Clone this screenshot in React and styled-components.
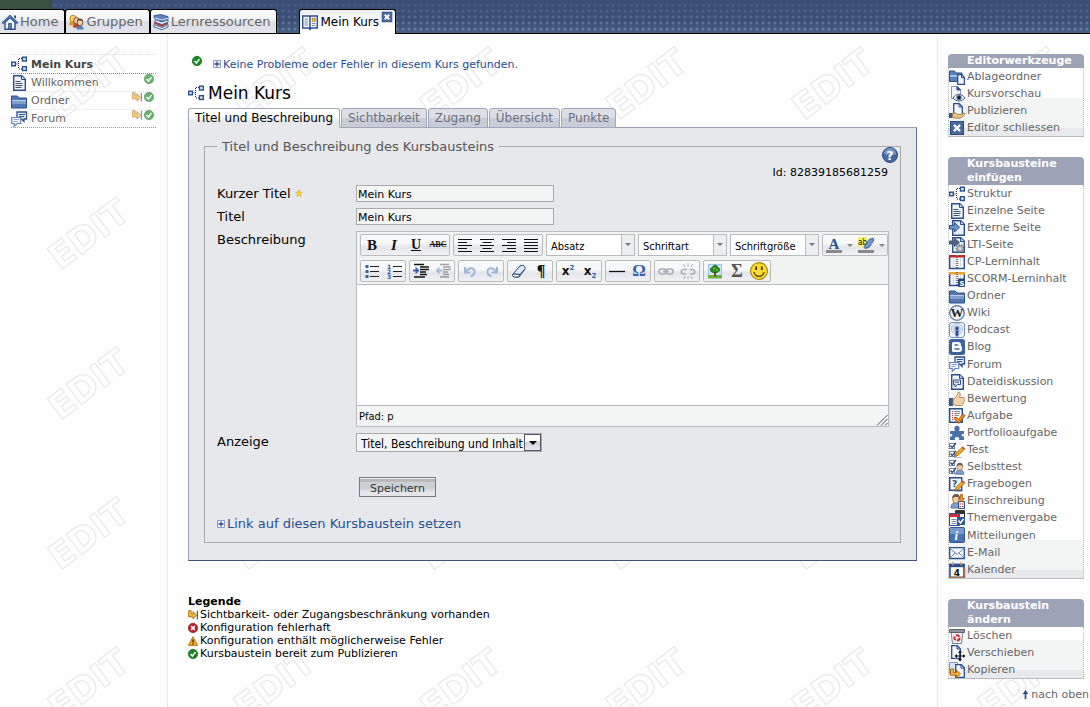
import React, { useState } from "react";
import styled, { createGlobalStyle, css } from "styled-components";

const verdana = `"DejaVu Sans", Verdana, sans-serif`;
const tahoma = `"DejaVu Sans Condensed", "DejaVu Sans", Tahoma, sans-serif`;

const blue = "#2a4f8c";
const sky = "#9db6da";

const Doc = ({ x = 2 }) => (
  <g transform={`translate(${x} 0)`}>
    <path d="M.7.7h8.1l3.5 3.5v11.1H.7z" fill="#eef2f9" stroke={blue} strokeWidth="1.4" />
    <path d="M8.5.8v3.7h3.7" fill="#c3d2e9" stroke={blue} />
  </g>
);

const Pencil = () => (
  <g>
    <path d="M5 15.5h8" stroke="#bbb" />
    <path d="M6 14.5l1-3.4 6.6-6 2 2.1-6.5 6.2z" fill="#f6a828" stroke="#a85d12" strokeWidth=".8" />
    <path d="M13 5.5l1-1 1.8 1.9-1 1z" fill="#c8382c" />
  </g>
);

const Person = () => (
  <g>
    <path d="M2 15c0-4 2-5.5 5-5.5S12 11 12 15z" fill="#7d9fcf" stroke="#44618f" strokeWidth=".8" />
    <ellipse cx="7" cy="6.2" rx="3.4" ry="4" fill="#f1c9a2" stroke="#8b6a4d" strokeWidth=".7" />
    <path d="M3.3 6C3 2.4 4.5 1 7.200 1s4.3 2 3.5 5L9.5 4 5 4z" fill="#6d5a4b" />
  </g>
);

const Checks = () => (
  <g fill="#fff" stroke="#6a84ad">
    <rect x=".5" y="1.5" width="5" height="5" />
    <rect x=".5" y="9.5" width="5" height="5" />
    <path d="M1.5 3.5l1.7 2L7 1M1.5 11.5l1.7 2L7 9" fill="none" stroke="#35496d" strokeWidth="1.3" />
  </g>
);

const Arrow = () => (
  <path d="M.5 5.5h5v-3l5 4.800-5 4.700V9h-5z" fill="#6f95cb" stroke={blue} />
);

const Folder = () => (
  <g>
    <path d="M.5 3h5.800l1.700 2h7.500v10H.5z" fill="#5679b2" stroke={blue} />
    <path d="M1 7h14v1.500H1z" fill="#b9cce8" />
    <path d="M1 8.500h14V11H1z" fill="#7f9ecd" />
  </g>
);

const Book = ({ band }) => (
  <g>
    <path d="M.7 2h14.6v12.500H.7z" fill="#f4f5f8" stroke={blue} strokeWidth="1.4" />
    <path d="M0 1h16v2.500H0z" fill={band} />
    <path d="M8 1v14" stroke="#777" strokeWidth="2.5" strokeDasharray="1 1" />
    <path d="M4.500 4v10M11.500 4v10" stroke="#d3dbea" />
  </g>
);

const ICONS = {
  struktur: (
    <g fill="#e7eefb" stroke={blue} strokeWidth="1.4">
      <rect x=".7" y="6.2" width="3.6" height="3.6" />
      <rect x="11.5" y="1.2" width="3.8" height="3.8" />
      <rect x="11.5" y="10.7" width="3.8" height="3.8" />
      <path d="M5.500 8h2M7.500 3v10M8 2.500h3M8 13h3" fill="none" stroke="#222" strokeWidth="1" strokeDasharray="1 1" />
    </g>
  ),
  seite: (
    <g>
      <Doc />
      <path d="M4.500 6.500h5M4.500 8.500h7M4.500 10.500h7M4.500 12.500h6" stroke="#48536a" />
    </g>
  ),
  extern: (
    <g>
      <Doc x={3} />
      <Arrow />
    </g>
  ),
  lti: (
    <g>
      <Doc x={3} />
      <path d="M.5 4h5V1.500l5 4-5 4V7h-5z" fill="#53657f" stroke="#41536f" />
      <circle cx="11" cy="11.5" r="3.6" fill="#aaa" stroke="#737373" strokeDasharray="1.5 1" strokeWidth="1.5" />
      <circle cx="11" cy="11.5" r="1.3" fill="#eee" />
    </g>
  ),
  cp: <Book band="#c4292b" />,
  scorm: (
    <g>
      <Book band="#f3a32a" />
      <rect x="9" y="7.5" width="7" height="8.5" rx="1" fill="#24467c" />
      <text x="10.4" y="14.5" fontSize="8" fontWeight="bold" fill="#fff" fontFamily={verdana}>s</text>
    </g>
  ),
  ordner: <Folder />,
  wiki: (
    <g>
      <circle cx="8" cy="8" r="7.300" fill="#eef0f3" stroke="#59749e" strokeWidth="1.3" />
      <text x="8" y="12.3" fontSize="13" fontWeight="bold" textAnchor="middle" fill="#222" fontFamily="Liberation Serif, serif">W</text>
    </g>
  ),
  podcast: (
    <g fill="none" stroke="#9db3d6">
      <rect x=".5" y=".5" width="15" height="15" rx="2.5" fill="#f2f6fc" stroke="#6f8fc0" />
      <circle cx="8" cy="7" r="5.5" />
      <circle cx="8" cy="7" r="3.3" />
      <circle cx="8" cy="6.5" r="1.9" fill={blue} stroke="none" />
      <path d="M6.300 8.500h3.400L9.200 14.500H6.800z" fill={blue} stroke="none" />
    </g>
  ),
  blog: (
    <g>
      <rect width="16" height="16" rx="2.5" fill="#3d639f" />
      <path d="M3 4.500A1.500 1.500 0 014.500 3H9a3 3 0 013 3c0 1.300.2 1.500 1 1.600V10a3 3 0 01-3 3H4.500A1.500 1.500 0 013 11.500z" fill="#fff" />
      <path d="M5.500 6h3.500M5.500 10h5" stroke="#3d639f" strokeWidth="1.6" />
    </g>
  ),
  forum: (
    <g>
      <path d="M6 1h9.500v7H13v2.500L10.500 8H6z" fill="#e3ebf8" stroke={blue} strokeWidth="1.3" />
      <path d="M8 3.500h6M8 5.500h5" stroke={blue} />
      <path d="M.7 6.500h9v6H6L3.200 15.300V12.500H.7z" fill="#f6f9fd" stroke="#6384b9" strokeWidth="1.2" />
      <path d="M2.500 8.500h5.500M2.500 10.500h4" stroke="#8aa4cd" />
    </g>
  ),
  datei: (
    <g>
      <Doc />
      <path d="M4.500 6h7v4.500h-3L6 13v-2.500H4.500z" fill="#dbe6f7" stroke={blue} />
      <path d="M6 8.200h4" stroke={blue} />
    </g>
  ),
  bewertung: (
    <g>
      <path d="M0 7h4v8H0z" fill="#37598f" />
      <path d="M4 8c3-1 4-3 5-6.500 2-.8 3 1 1.500 5h4c1.300 0 1.300 2 .3 2.200 1 .6.7 2-.3 2.200.5.8.2 1.700-.8 1.900.3 1-.2 1.700-1.200 1.700H7L4 13z" fill="#f3d3a6" stroke="#a98258" strokeWidth=".9" />
    </g>
  ),
  aufgabe: (
    <g>
      <path d="M.7.7h12.6v13.6H.7z" fill="#f8f9fc" stroke={blue} strokeWidth="1.4" />
      <path d="M3 3.500h1M3 5.500h1M3 7.500h1M3 9.500h1M3 11.500h1" stroke="#c44" />
      <path d="M5.500 3.500H11M5.500 5.500H11M5.500 7.500H10M5.500 9.500H7" stroke="#888" />
      <path d="M5 10.500l2-1.500 2.500 2.500 4.500-5.500 2 1.500-6.200 8z" fill="#f08a24" stroke="#a04b0c" strokeWidth=".9" />
    </g>
  ),
  portfolio: (
    <path d="M1 6h5C4.500 3.500 5.500.8 8 .8s3.500 2.700 2 5.200h5v3.500c-1.500-1-2.500-.2-2.300 1 .2 1.200 1.300 1.300 2.300.5V15h-5c.8-2-.4-3-2-3s-2.800 1-2 3H1v-4c1 .8 2.100.7 2.300-.5.2-1.200-.8-2-2.300-1z" fill="#4a70ab" />
  ),
  test: (
    <g>
      <Checks />
      <Pencil />
    </g>
  ),
  selbsttest: (
    <g>
      <Checks />
      <g transform="translate(5 3) scale(.82)">
        <Person />
      </g>
    </g>
  ),
  fragebogen: (
    <g>
      <path d="M.7 1.700h12v12.6H.7z" fill="#f3f6fb" stroke={blue} strokeWidth="1.4" />
      <text x="3" y="10.5" fontSize="9" fontWeight="bold" fill={blue} fontFamily={verdana}>?</text>
      <Pencil />
    </g>
  ),
  einschreibung: (
    <g>
      <Person />
      <path d="M9.500 8.500h6v7h-6z" fill="#fff" stroke={blue} />
      <path d="M10.500 11H12M13 11h1.500M10.500 13.500H12M13 13.500h1.500" stroke="#b33" />
      <path d="M11.500 1.500h2v4h2l-3 3.500-3-3.500h2z" fill="#f49a2c" stroke="#a8560e" strokeWidth=".8" />
    </g>
  ),
  themen: (
    <g>
      <path d="M6.500.5h9v12h-9z" fill="#eef1f6" stroke="#333" />
      <path d="M7 1h8.500v3H7z" fill="#333" />
      <path d="M.5 3.500h10v12H.5z" fill="#f7f8fa" stroke={blue} />
      <path d="M1 4h9.500v3H1z" fill="#cf3038" />
      <path d="M2.500 9.500h5M2.500 11.500h5M2.500 13.500h5" stroke="#7f91b0" />
      <path d="M8 7h8v8H8z" fill="#2f5a99" />
      <path d="M9.500 10.500l2 2.500 3-4" fill="none" stroke="#fff" strokeWidth="1.5" />
    </g>
  ),
  mitteilung: (
    <g>
      <rect x=".5" y=".5" width="15" height="15" rx="1" fill="#4a73b2" stroke="#2f5694" />
      <path d="M1 1h14v6H1z" fill="#7799cb" />
      <text x="5.5" y="13" fontSize="13" fontStyle="italic" fontWeight="bold" fill="#fff" fontFamily="Liberation Serif, serif">i</text>
    </g>
  ),
  mail: (
    <g>
      <path d="M.7 2.700h14.600v10.800H.7z" fill="#f3f6fb" stroke={blue} strokeWidth="1.3" />
      <path d="M1 3.500l7 6 7-6M1 13l5-5M15 13l-5-5" fill="none" stroke="#6a86b4" />
    </g>
  ),
  kalender: (
    <g>
      <path d="M1 2.500h14v12.8H1z" fill="#fff" stroke={blue} strokeWidth="1.6" />
      <path d="M.3 1.800h15.400v3.400H.3z" fill={blue} />
      <path d="M4 .3v3M12 .3v3" stroke="#c99a6a" strokeWidth="1.6" />
      <path d="M.5 15.500h15.300V6" fill="none" stroke="#b9783b" />
      <text x="8" y="13.8" fontSize="9" fontWeight="bold" textAnchor="middle" fill="#111" fontFamily={verdana}>4</text>
    </g>
  ),
  ablage: (
    <g>
      <path d="M.5 2h5L7 4h6v8.500H.5z" fill="#5c80b8" stroke={blue} />
      <path d="M1 6h12v2H1z" fill="#a9c0e2" />
      <path d="M8.700 5.700h4l2.700 2.700v6.900H8.700z" fill="#f0f5fc" stroke={blue} strokeWidth="1.3" />
      <path d="M12.500 6v2.700h3" fill="none" stroke={blue} />
    </g>
  ),
  vorschau: (
    <g>
      <path d="M2.500.5h6l3 3v9h-9z" fill="#f4f7fc" stroke="#7f97bd" />
      <path d="M8 .5V4h3.500z" fill={blue} stroke={blue} />
      <path d="M4 12c3-5 8.500-5 12 0-3.500 4-9 4-12 0z" fill="#e8edf4" stroke="#555f70" />
      <circle cx="10" cy="11.5" r="2.6" fill="#3f6396" />
      <circle cx="10" cy="11.5" r="1.2" fill="#111" />
    </g>
  ),
  publizieren: (
    <g>
      <path d="M4.700.7h5.600l3 3v8.600H4.700z" fill="#f1f5fb" stroke={blue} strokeWidth="1.3" />
      <path d="M10 1v3h3.300" fill="none" stroke={blue} />
      <path d="M0 10h3.500v5H0z" fill="#37598f" />
      <path d="M3.500 10.500l3-.5L9 11.500h3l3.500-1.500c1 .8.5 1.700-4 5-1.500.5-4 .3-8-.5z" fill="#efc48c" stroke="#a4743d" strokeWidth=".9" />
    </g>
  ),
  schliessen: (
    <g>
      <rect x="1.5" y="1.5" width="13" height="13" fill="#4b6b9e" stroke="#27477d" />
      <path d="M5 5l6 6M11 5l-6 6" stroke="#fff" strokeWidth="2.4" />
    </g>
  ),
  loeschen: (
    <g>
      <path d="M2 4h12l-1.500 11.500h-9z" fill="#eceef2" stroke="#7b8494" />
      <path d="M.5 1.500h15v3H.5z" fill="#8e959f" stroke="#5d6470" />
      <circle cx="8" cy="9.8" r="2.6" fill="none" stroke="#d3222f" strokeWidth="2" strokeDasharray="4 1.4" />
    </g>
  ),
  verschieben: (
    <g>
      <path d="M2.700.7h5.600l3 3v9.600H2.700z" fill="#f4f7fc" stroke={blue} strokeWidth="1.3" />
      <path d="M8 1v3h3.300" fill="none" stroke={blue} />
      <path d="M11 6v10M6 11h10" stroke="#111" strokeWidth="1.2" />
      <path d="M11 5.500l2 2.200H9zM11 16.200l2-2.200H9zM5.800 11L8 9v4zM16.200 11L14 9v4z" fill="#111" />
    </g>
  ),
  kopieren: (
    <g>
      <path d="M.5.5h8v11h-8z" fill="#d9e4f5" stroke="#7d9ac8" />
      <path d="M6.700 2.700h5.600l3 3v9.600H6.700z" fill="#f2f6fc" stroke={blue} strokeWidth="1.3" />
      <path d="M12 3v3.200h3.300" fill="none" stroke={blue} />
      <path d="M1.500 7h3v3.500h3V8l4 4-4 3.800v-2.600h-6z" fill="#f7b03b" stroke="#a8640f" strokeWidth=".9" />
    </g>
  ),
  home: (
    <g>
      <path d="M3 8v7.300h10V8L8 3.500z" fill="#f3f6fb" stroke={blue} strokeWidth="1.4" />
      <path d="M0 8.700L8 1l8 7.700-1.500 1L8 4 1.500 9.700z" fill="#4f76b1" stroke={blue} strokeWidth=".8" />
      <path d="M6.500 9.500h3V15h-3z" fill="#5a80ba" stroke={blue} strokeWidth=".8" />
      <path d="M12 1.500h2V5l-2-1.800z" fill={blue} />
    </g>
  ),
  gruppen: (
    <g>
      <ellipse cx="5" cy="4.8" rx="3.2" ry="3.6" fill="#f6d06a" stroke="#b78a2c" />
      <path d="M1 11c0-3 1.500-3.500 4-3.500S9 9 9 12z" fill="#e08f2c" />
      <ellipse cx="8.5" cy="6.8" rx="2.8" ry="3.3" fill="#f2c79c" stroke="#7b4b2c" />
      <path d="M5 13.500c0-3 1.500-3.500 4-3.500s3.500 2 3.500 4z" fill="#b9422f" />
      <ellipse cx="12" cy="8.5" rx="2.8" ry="3.3" fill="#f4d0a8" stroke="#6d4a35" />
      <path d="M9 7.500c0-4 6-4 6 0l-1.500-1h-3z" fill="#5b4335" />
      <path d="M8.500 15.500c0-3 1.200-3.700 3.500-3.700s3.700 1.200 3.700 3.700z" fill="#5781bd" />
    </g>
  ),
  lern: (
    <g stroke={blue} strokeWidth=".8">
      <path d="M1 10.500l8 3 6-3V13l-6 2.700L1 13z" fill="#e6ebf4" />
      <path d="M1 9l5-2 9 2-6 3.500z" fill="#d0453f" stroke="#96302c" />
      <path d="M2 5.500L9 8l6-2.500V8l-6 2.500L2 8z" fill="#f1f3f8" />
      <path d="M1 1.500L8 .6l7 2v3L8.500 7 1 4z" fill="#5d84be" />
      <path d="M1.500 3.800l7 2.200L15 4.500" fill="none" stroke="#fff" />
    </g>
  ),
  kurs: (
    <g>
      <path d="M.7 2h14.6v12H9l-1 1.500L7 14H.7z" fill="#f7f9fc" stroke={blue} strokeWidth="1.4" />
      <path d="M8 2v13" stroke={blue} strokeWidth="1.5" />
      <path d="M2.500 5H6M2.500 7H6M2.500 9H6M2.500 11H6M10 9.500h3.500M10 11.500h3.500" stroke="#7d8ea9" />
      <rect x="10.2" y="4.2" width="3" height="3" fill="#f4c04c" stroke="#a8842b" strokeWidth=".8" />
    </g>
  ),
  ok: (
    <g>
      <circle cx="8" cy="8" r="7.5" fill="#168a1e" stroke="#0d5a13" />
      <path d="M4 8l3 3.200L12 5" fill="none" stroke="#fff" strokeWidth="2.4" />
    </g>
  ),
  fehler: (
    <g>
      <circle cx="8" cy="8" r="7.5" fill="#b3242c" stroke="#7b1218" />
      <path d="M5 5l6 6M11 5l-6 6" stroke="#fff" strokeWidth="2.4" />
    </g>
  ),
  warnung: (
    <g>
      <path d="M8 1l7.500 14H.5z" fill="#f5a524" stroke="#9c650d" strokeWidth="1.2" />
      <path d="M8 5.500v5M8 11.500v2" stroke="#3a2503" strokeWidth="2" />
    </g>
  ),
  zugang: (
    <g>
      <path d="M1 1h4v5.500h3V2.500l5.500 6-5.500 6V11H1z" fill="#f8b63c" stroke="#b0700f" strokeWidth="1.4" />
      <path d="M15 1v14" stroke="#3f5f96" strokeWidth="2" />
    </g>
  ),
  hilfe: (
    <g>
      <circle cx="8" cy="8" r="7.5" fill="#46699f" stroke="#284a80" />
      <path d="M2 7a6 6 0 0112 0c-4 1.500-8 1.500-12 0z" fill="#7897c6" />
      <text x="8" y="12.6" fontSize="12.5" fontWeight="bold" textAnchor="middle" fill="#fff" fontFamily={verdana}>?</text>
    </g>
  ),
  stern: (
    <path d="M8 1l2 5 5 .4-4 3.400 1.300 5.200L8 12.200 3.700 15 5 9.800 1 6.400 6 6z" fill="#fbcf3f" stroke="#d99f23" />
  ),
  plus: (
    <g>
      <path d="M1 1h14v14H1z" fill="#eef2fa" stroke="#8b9fc3" strokeWidth="2" />
      <path d="M8 3v10M3 8h10" stroke={blue} strokeWidth="2.6" />
    </g>
  ),
  hoch: <path d="M8 0l5 7H9.500v9h-3V7H3z" fill={blue} />,
  left: <path d="M1 2.500h14M1 5.500h9M1 8.500h14M1 11.500h9M1 14.500h14" stroke="#111" strokeWidth="1.2" />,
  center: <path d="M1 2.500h14M3.500 5.500h9M1 8.500h14M3.500 11.500h9M1 14.500h14" stroke="#111" strokeWidth="1.2" />,
  right: <path d="M1 2.500h14M6 5.500h9M1 8.500h14M6 11.500h9M1 14.500h14" stroke="#111" strokeWidth="1.2" />,
  block: <path d="M1 2.500h14M1 5.500h14M1 8.500h14M1 11.500h14M1 14.500h14" stroke="#111" strokeWidth="1.2" />,
  punkte: (
    <g>
      <path d="M6 3.500h9M6 8.500h9M6 13.500h9" stroke="#222" strokeWidth="1.1" />
      <path d="M1.500 2h3v3h-3zM1.500 7h3v3h-3zM1.500 12h3v3h-3z" fill="#3e63a3" />
    </g>
  ),
  nummern: (
    <g>
      <path d="M7 3.500h9M7 8.500h9M7 13.500h9" stroke="#222" strokeWidth="1.1" />
      <g fontSize="6" fontWeight="bold" fill="#2f56a0" fontFamily={verdana}>
        <text x="1" y="5.5">1</text>
        <text x="1" y="10.5">2</text>
        <text x="1" y="15.8">3</text>
      </g>
    </g>
  ),
  einzug: (
    <g>
      <path d="M1 1.500h10M7 4h9M7 6.500h9M7 9h6M7 11.500h7M1 14h11" stroke="#111" strokeWidth="1.4" />
      <path d="M0 6.500h2.500v-3l4 4-4 4v-3H0z" fill="#3c69b5" />
    </g>
  ),
  auszug: (
    <g opacity=".4">
      <path d="M5 1.500h9M8 4h8M8 6.500h8M8 9h5M8 11.500h6M5 14h9" stroke="#222" strokeWidth="1.4" />
      <path d="M7 6.500H4.500v-3l-4 4 4 4v-3H7z" fill="#3c69b5" />
    </g>
  ),
  undo: <path d="M3 4v5.500h5.500M3.500 9C7 3.500 13 4.500 12.500 9c-.3 2.500-2 4-4 4.500" fill="none" stroke={sky} strokeWidth="2" />,
  redo: <path d="M13 4v5.500H7.500M12.500 9C9 3.500 3 4.500 3.500 9c.3 2.500 2 4 4 4.500" fill="none" stroke={sky} strokeWidth="2" />,
  radierer: (
    <g stroke="#2c4876">
      <path d="M2 11l7-8c3-1.500 6 .5 5 3l-6 8H4.500C2.500 14 1 13 2 11z" fill="#dce8f8" />
      <path d="M2 11l7 .5 5-5.500" fill="none" />
      <path d="M2 11l7 .5L8 14H4.500C2 14 1 13 2 11z" fill="#fff" />
    </g>
  ),
  linie: <path d="M0 8.500h16" stroke="#111" strokeWidth="1.3" />,
  link: (
    <g fill="none" stroke="#a9afba" strokeWidth="1.6">
      <rect x="1" y="6" width="7" height="5" rx="2.5" />
      <rect x="8" y="6" width="7" height="5" rx="2.5" />
      <path d="M5 8.500h6" />
    </g>
  ),
  unlink: (
    <g fill="none" stroke="#a9afba" strokeWidth="1.6">
      <path d="M7 6.500H3.500a2.200 2.200 0 000 4.500H6M9.500 6.500h3a2.200 2.200 0 010 4.500H10" />
      <path d="M5 4L3.500 1M8 3.500V.5M11 4l1.500-3M5 13l-1.500 3M8 13.500V16M11 13l1.500 3" strokeWidth="1" />
    </g>
  ),
  bild: (
    <g>
      <path d="M1.500 1.500h13v13h-13z" fill="#cfe6fb" stroke="#9cc3e6" />
      <path d="M1 12h14v3.500H1z" fill="#6bb23f" />
      <path d="M7 9h2.200v4.500H7z" fill="#7b4a1e" />
      <path d="M8 2.500c2 0 2.500 1 2.500 2 2.500.2 3 3.500.5 4.500-1.500.7-4.500.7-6 0-2.500-1-2-4.300.5-4.500 0-1 .8-2 2.500-2z" fill="#2f8f22" stroke="#176312" />
      <path d="M6 5.500h2M9 7h2" stroke="#8bd458" />
    </g>
  ),
  smile: (
    <g>
      <circle cx="8" cy="8" r="7.5" fill="#fbdc2e" stroke="#a8850c" />
      <path d="M5.500 4v3M10.500 4v3" stroke="#4a3504" strokeWidth="1.6" />
      <path d="M3.500 9c1.500 5 7.500 5 9 0" fill="none" stroke="#4a3504" strokeWidth="1.2" />
    </g>
  ),
  textfarbe: (
    <g>
      <text x="8" y="12" fontSize="15" fontWeight="bold" textAnchor="middle" fill={blue} fontFamily="Liberation Serif, serif">A</text>
      <path d="M0 13h16v3H0z" fill="#888" />
    </g>
  ),
  marker: (
    <g>
      <path d="M0 0h9v10H0z" fill="#f6ee6c" />
      <text x="0" y="8" fontSize="8" fill="#111" fontFamily={tahoma}>ab</text>
      <path d="M6 10.500l5-8 4-1.500 1 2-5 7.500-4 1z" fill="#6f98cb" stroke="#2f5288" strokeWidth=".8" />
      <path d="M0 13h16v3H0z" fill="#888" />
    </g>
  ),
};

function Icon({ name, size = 16 }) {
  return (
    <Svg width={size} height={size} viewBox="0 0 16 16" aria-hidden="true">
      {ICONS[name]}
    </Svg>
  );
}

const editorTools = [
  ["ablage", "Ablageordner"],
  ["vorschau", "Kursvorschau"],
  ["publizieren", "Publizieren"],
  ["schliessen", "Editor schliessen"],
];

const insertTools = [
  ["struktur", "Struktur"],
  ["seite", "Einzelne Seite"],
  ["extern", "Externe Seite"],
  ["lti", "LTI-Seite"],
  ["cp", "CP-Lerninhalt"],
  ["scorm", "SCORM-Lerninhalt"],
  ["ordner", "Ordner"],
  ["wiki", "Wiki"],
  ["podcast", "Podcast"],
  ["blog", "Blog"],
  ["forum", "Forum", true],
  ["datei", "Dateidiskussion"],
  ["bewertung", "Bewertung"],
  ["aufgabe", "Aufgabe"],
  ["portfolio", "Portfolioaufgabe"],
  ["test", "Test"],
  ["selbsttest", "Selbsttest"],
  ["fragebogen", "Fragebogen"],
  ["einschreibung", "Einschreibung"],
  ["themen", "Themenvergabe"],
  ["mitteilung", "Mitteilungen", true],
  ["mail", "E-Mail"],
  ["kalender", "Kalender"],
];

const changeTools = [
  ["loeschen", "Löschen"],
  ["verschieben", "Verschieben"],
  ["kopieren", "Kopieren"],
];

const legend = [
  ["zugang", "Sichtbarkeit- oder Zugangsbeschränkung vorhanden"],
  ["fehler", "Konfiguration fehlerhaft"],
  ["warnung", "Konfiguration enthält möglicherweise Fehler"],
  ["ok", "Kursbaustein bereit zum Publizieren"],
];

const tabs = ["Titel und Beschreibung", "Sichtbarkeit", "Zugang", "Übersicht", "Punkte"];

const toolRow = [
  ["punkte", "nummern"],
  ["einzug", "auszug"],
  ["undo", "redo"],
  ["radierer", "absatz"],
  ["hoch2", "tief2"],
  ["linie", "omega"],
  ["link", "unlink"],
  ["bild", "summe", "smile"],
];

function ToolBox({ title, items }) {
  return (
    <Box>
      <BoxTitle>{title}</BoxTitle>
      <BoxList>
        {items.map(([icon, label, tall]) => (
          <li key={label}>
            <BoxLink href="#" $tall={tall}>
              <Icon name={icon} />
              {label}
            </BoxLink>
          </li>
        ))}
      </BoxList>
    </Box>
  );
}

function Combo({ label }) {
  return (
    <ComboWrap>
      <ComboSelect aria-label={label}>
        <option>{label}</option>
      </ComboSelect>
    </ComboWrap>
  );
}

function Editor() {
  const glyphs = {
    absatz: <Glyph $size={16}>¶</Glyph>,
    hoch2: <Glyph $size={12} $sans>x<sup>2</sup></Glyph>,
    tief2: <Glyph $size={12} $sans>x<sub>2</sub></Glyph>,
    omega: <Glyph $size={17} $color="#3560ad">Ω</Glyph>,
    summe: <Glyph $size={18} $color="#555">Σ</Glyph>,
  };

  return (
    <EditorBox>
      <Toolbar>
        <ToolLine>
          <ToolGroup>
            <ToolButton aria-label="Fett"><Glyph $size={15}>B</Glyph></ToolButton>
            <ToolButton aria-label="Kursiv"><Glyph $size={15} $italic>I</Glyph></ToolButton>
            <ToolButton aria-label="Unterstrichen"><Glyph $size={14} $line="underline">U</Glyph></ToolButton>
            <ToolButton aria-label="Durchgestrichen"><Glyph $size={8} $line="line-through">ABC</Glyph></ToolButton>
          </ToolGroup>
          <ToolGroup>
            {["left", "center", "right", "block"].map((name) => (
              <ToolButton key={name} aria-label={name}><Icon name={name} /></ToolButton>
            ))}
          </ToolGroup>
          <Combo label="Absatz" />
          <Combo label="Schriftart" />
          <Combo label="Schriftgröße" />
          <ToolGroup>
            <ToolButton $drop aria-label="Textfarbe"><Icon name="textfarbe" /></ToolButton>
            <ToolButton $drop aria-label="Hintergrundfarbe"><Icon name="marker" /></ToolButton>
          </ToolGroup>
        </ToolLine>
        <ToolLine>
          {toolRow.map((group) => (
            <ToolGroup key={group[0]}>
              {group.map((name) => (
                <ToolButton key={name} aria-label={name}>
                  {glyphs[name] || <Icon name={name} size={name === "smile" ? 18 : 16} />}
                </ToolButton>
              ))}
            </ToolGroup>
          ))}
        </ToolLine>
      </Toolbar>
      <EditorText id="beschreibung" />
      <EditorStatus>
        Pfad: p
        <Grip width="12" height="12" viewBox="0 0 12 12" aria-hidden="true">
          <path d="M1 11.500L11.500 1M5 11.500L11.500 5M9 11.500L11.500 9" stroke="#555" />
        </Grip>
      </EditorStatus>
    </EditorBox>
  );
}

export default function App() {
  const [active, setActive] = useState(tabs[0]);

  return (
    <Page>
      <GlobalStyle />
      <Watermark aria-hidden="true">
        <defs>
          <pattern id="edit" width="186" height="150" patternUnits="userSpaceOnUse">
            <text
              transform="translate(60 86) rotate(-37)"
              fontFamily="DejaVu Sans"
              fontSize="35"
              fontWeight="bold"
              fill="none"
              stroke="#e4e5e8"
            >
              EDIT
            </text>
          </pattern>
        </defs>
        <rect width="100%" height="100%" fill="url(#edit)" />
      </Watermark>

      <Header>
        <SiteTab href="#"><Icon name="home" />Home</SiteTab>
        <SiteTab href="#"><Icon name="gruppen" />Gruppen</SiteTab>
        <SiteTab href="#"><Icon name="lern" />Lernressourcen</SiteTab>
        <CourseTab>
          <CourseLink href="#"><Icon name="kurs" />Mein Kurs</CourseLink>
          <CloseButton aria-label="Tab schliessen"><Icon name="schliessen" size={12} /></CloseButton>
        </CourseTab>
      </Header>

      <Columns>
        <Side>
          <Tree>
            <TreeRow $root><Icon name="struktur" /><a href="#">Mein Kurs</a></TreeRow>
            <TreeRow>
              <Icon name="seite" /><a href="#">Willkommen</a>
              <Status><Icon name="ok" size={10} /></Status>
            </TreeRow>
            <TreeRow>
              <Icon name="ordner" /><a href="#">Ordner</a>
              <Status><Icon name="zugang" size={10} /><Icon name="ok" size={10} /></Status>
            </TreeRow>
            <TreeRow>
              <Icon name="forum" /><a href="#">Forum</a>
              <Status><Icon name="zugang" size={10} /><Icon name="ok" size={10} /></Status>
            </TreeRow>
          </Tree>
        </Side>

        <Main>
          <Message>
            <Icon name="ok" size={10} />
            <a href="#"><Icon name="plus" size={8} />Keine Probleme oder Fehler in diesem Kurs gefunden.</a>
          </Message>
          <Title><Icon name="struktur" />Mein Kurs</Title>
          <Tabs role="tablist">
            {tabs.map((tab) => (
              <Tab key={tab} role="tab" aria-selected={tab === active} $active={tab === active} onClick={() => setActive(tab)}>
                {tab}
              </Tab>
            ))}
          </Tabs>
          <Panel>
            <Fieldset>
              <legend>Titel und Beschreibung des Kursbausteins</legend>
              <HelpButton aria-label="Hilfe"><Icon name="hilfe" /></HelpButton>
              <NodeId>Id: 82839185681259</NodeId>
              <Form>
                <label htmlFor="kurz">Kurzer Titel <Icon name="stern" size={8} /></label>
                <TextInput id="kurz" defaultValue="Mein Kurs" />
                <label htmlFor="titel">Titel</label>
                <TextInput id="titel" defaultValue="Mein Kurs" />
                <label htmlFor="beschreibung">Beschreibung</label>
                <Editor />
                <label htmlFor="anzeige">Anzeige</label>
                <DisplayWrap>
                  <DisplaySelect id="anzeige">
                    <option>Titel, Beschreibung und Inhalt</option>
                  </DisplaySelect>
                </DisplayWrap>
                <SaveButton>Speichern</SaveButton>
              </Form>
              <NodeLink href="#"><Icon name="plus" size={8} />Link auf diesen Kursbaustein setzen</NodeLink>
            </Fieldset>
          </Panel>
          <Legend>
            <h4>Legende</h4>
            <ul>
              {legend.map(([icon, text]) => (
                <li key={icon}><Icon name={icon} size={10} />{text}</li>
              ))}
            </ul>
          </Legend>
        </Main>

        <Tools>
          <ToolBox title="Editorwerkzeuge" items={editorTools} />
          <ToolBox title="Kursbausteine einfügen" items={insertTools} />
          <ToolBox title="Kursbaustein ändern" items={changeTools} />
          <TopLink href="#"><Icon name="hoch" size={9} />nach oben</TopLink>
        </Tools>
      </Columns>
    </Page>
  );
}

const GlobalStyle = createGlobalStyle`
  * {
    box-sizing: border-box;
  }
  body {
    margin: 0;
    background: #fefefe;
    color: #000;
    font-family: ${verdana};
    font-size: 11px;
    line-height: 13px;
  }
  ul, h2, h3, h4 {
    margin: 0;
    padding: 0;
    list-style: none;
  }
  a {
    text-decoration: none;
    color: inherit;
  }
  button, input, select, textarea {
    font-family: inherit;
    margin: 0;
  }
`;

const Page = styled.div`
  position: relative;
  min-height: 100vh;
  z-index: 0;
`;

const Watermark = styled.svg`
  position: absolute;
  top: 35px;
  left: 0;
  width: 100%;
  height: calc(100% - 35px);
  z-index: -1;
`;

const Svg = styled.svg`
  flex: none;
  display: block;
  overflow: visible;
`;

const Glyph = styled.span`
  font-family: ${(p) => (p.$sans ? verdana : `"Liberation Serif", serif`)};
  font-weight: bold;
  font-size: ${(p) => p.$size}px;
  font-style: ${(p) => (p.$italic ? "italic" : "normal")};
  text-decoration: ${(p) => p.$line || "none"};
  color: ${(p) => p.$color || "#111"};
  line-height: 16px;
  sup, sub {
    font-size: 7px;
    line-height: 0;
    color: #2f5fae;
  }
`;

const Header = styled.header`
  display: flex;
  align-items: flex-end;
  height: 34px;
  border-bottom: 1px solid #000;
  background:
    linear-gradient(#3a5140, #3a5140) 0 0 / 52px 9px no-repeat,
    linear-gradient(rgba(59, 79, 118, 0.9), rgba(59, 79, 118, 0.6) 60%, rgba(70, 95, 130, 0.2)),
    radial-gradient(circle at 50% 66%, #7d91b0 1px, transparent 2px) 4px 1px / 6px 6px,
    linear-gradient(#3b4f76 60%, #496384);
`;

const tabFace = css`
  display: flex;
  align-items: center;
  height: 24px;
  border: 1px solid #000;
  border-bottom: 0;
  border-radius: 3px 3px 0 0;
`;

const SiteTab = styled.a`
  ${tabFace}
  gap: 2px;
  padding: 0 6px 0 2px;
  font-size: 13px;
  color: #666;
  background: linear-gradient(#fdfdfe, #eef0f3 50%, #dcdfe6 50%, #e3e5ea);
  &:first-child {
    border-left: 0;
    border-top-left-radius: 0;
  }
`;

const CourseTab = styled.div`
  ${tabFace}
  height: 25px;
  margin: 0 0 -1px 22px;
  padding: 0 2px;
  font-size: 12px;
  background: linear-gradient(#eceef2, #fefefe 70%);
`;

const CourseLink = styled.a`
  display: flex;
  align-items: center;
  gap: 2px;
`;

const CloseButton = styled.button`
  align-self: flex-start;
  border: 0;
  padding: 1px 0 0 2px;
  background: none;
`;

const Columns = styled.div`
  display: grid;
  grid-template-columns: 168px minmax(0, 1fr) 153px;
  min-height: calc(100vh - 34px);
`;

const Side = styled.nav`
  padding: 20px 11px 0;
  border-right: 1px dotted #ddd;
`;

const Tree = styled.ul`
  border-bottom: 1px dotted #999;
`;

const TreeRow = styled.li`
  display: flex;
  align-items: center;
  gap: 4px;
  height: ${(p) => (p.$root ? 19 : 18)}px;
  border-top: 1px dotted ${(p) => (p.$root ? "#ddd" : "#e4e4e4")};
  color: ${(p) => (p.$root ? "#444" : "#666")};
  font-weight: ${(p) => (p.$root ? "bold" : "normal")};
  &:nth-child(2) {
    border-top-color: #888;
  }
`;

const Status = styled.span`
  display: flex;
  gap: 2px;
  margin: 0 2px 8px auto;
  opacity: 0.65;
`;

const Main = styled.main`
  padding: 22px 20px 0;
`;

const Message = styled.div`
  display: flex;
  gap: 11px;
  padding-left: 4px;
  color: ${blue};
  a {
    display: flex;
    align-items: center;
    gap: 2px;
    height: 16px;
  }
`;

const Title = styled.h2`
  display: flex;
  align-items: center;
  gap: 4px;
  height: 20px;
  margin: 11px 0 5px;
  font-size: 17px;
  font-weight: normal;
`;

const Tabs = styled.div`
  display: flex;
  gap: 1px;
  margin-bottom: -1px;
`;

const Tab = styled.button`
  height: 20px;
  padding: 0 6px;
  border: 1px solid #a0a7ba;
  border-radius: 3px 3px 0 0;
  font-size: 12px;
  line-height: 16px;
  color: #6b6f7c;
  background: linear-gradient(#dcdfe5 50%, #c9cdd8 50%);
  ${(p) =>
    p.$active &&
    css`
      color: #000;
      border-bottom-color: #e7e8ec;
      background: linear-gradient(#fefefe 35%, #e7e8ec 70%);
    `}
`;

const Panel = styled.div`
  padding: 11px 15px 17px;
  border: 1px solid #98a1b8;
  border-bottom-color: #3f5378;
  border-right-color: #5f7095;
  background: #e7e8ec;
`;

const Fieldset = styled.fieldset`
  position: relative;
  margin: 0;
  min-width: 0;
  padding: 12px 11px 11px 12px;
  border: 1px solid #a9a9a9;
  legend {
    padding: 0 5px;
    font-size: 13px;
    line-height: 15px;
    color: #555;
  }
`;

const HelpButton = styled.button`
  position: absolute;
  top: -7px;
  right: 2px;
  padding: 0;
  border: 0;
  background: none;
`;

const NodeId = styled.div`
  text-align: right;
  padding-right: 1px;
`;

const Form = styled.div`
  display: grid;
  grid-template-columns: 139px minmax(0, 1fr);
  row-gap: 6px;
  margin-top: 6px;
  label {
    font-size: 13px;
    line-height: 17px;
    svg {
      display: inline-block;
      vertical-align: 1px;
    }
  }
`;

const TextInput = styled.input`
  width: 198px;
  height: 17px;
  padding: 2px 1px 0;
  border: 1px solid #a9a9a9;
  background: #f3f5f5;
  font-size: 11px;
`;

const EditorBox = styled.div`
  display: flex;
  flex-direction: column;
  border: 1px solid #bbb;
  background: #fff;
  min-width: 0;
`;

const Toolbar = styled.div`
  display: flex;
  flex-direction: column;
  gap: 4px;
  padding: 2px 0 2px 3px;
  background: #f1f3f3;
  border-bottom: 1px solid #bbb;
`;

const ToolLine = styled.div`
  display: flex;
  gap: 3px;
`;

const ToolGroup = styled.div`
  display: flex;
  height: 22px;
  border: 1px solid #bbb;
  border-radius: 2px;
  background: linear-gradient(#f7f8f9 40%, #e4e6eb 60%, #f0f1f3);
`;

const ToolButton = styled.button`
  display: flex;
  align-items: center;
  justify-content: center;
  width: ${(p) => (p.$drop ? 32 : 22)}px;
  padding: 0;
  border: 0;
  background: none;
  ${(p) =>
    p.$drop &&
    css`
      gap: 5px;
      &::after {
        content: "";
        border: 3px solid transparent;
        border-top-color: #888;
        border-bottom: 0;
      }
    `}
`;

const ComboWrap = styled.div`
  position: relative;
  width: 89px;
  &::after {
    content: "";
    position: absolute;
    right: 4px;
    top: 9px;
    border: 3px solid transparent;
    border-top-color: #777;
    border-bottom: 0;
    pointer-events: none;
  }
`;

const ComboSelect = styled.select`
  appearance: none;
  width: 100%;
  height: 22px;
  padding: 2px 4px 0;
  border: 1px solid #bbb;
  border-radius: 0;
  font-family: ${tahoma};
  font-size: 11px;
  color: #000;
  background: linear-gradient(90deg, #bbb 1px, #eceef1 1px) right / 13px 100% no-repeat #fff;
`;

const EditorText = styled.textarea`
  height: 120px;
  border: 0;
  outline: 0;
  resize: none;
  background: #fff;
`;

const EditorStatus = styled.div`
  display: flex;
  justify-content: space-between;
  align-items: flex-end;
  height: 21px;
  padding: 0 0 3px 2px;
  border-top: 1px solid #bbb;
  background: #f3f5f4;
  font-family: ${tahoma};
`;

const Grip = styled.svg`
  margin-bottom: -3px;
`;

const DisplayWrap = styled.div`
  position: relative;
  width: 186px;
  &::after {
    content: "";
    position: absolute;
    right: 5px;
    top: 8px;
    border: 4px solid transparent;
    border-top-color: #000;
    border-bottom: 0;
    pointer-events: none;
  }
`;

const DisplaySelect = styled.select`
  appearance: none;
  display: block;
  width: 100%;
  height: 19px;
  padding: 2px 17px 0 4px;
  border: 1px solid #a9a9a9;
  border-radius: 0;
  font-family: ${tahoma};
  font-size: 12px;
  color: #000;
  background:
    linear-gradient(#fafafa 45%, #ccd2da 50%, #e8eaee) right 1px center / 15px 15px no-repeat,
    linear-gradient(#556, #556) right / 17px 17px no-repeat #f3f5f5;
`;

const SaveButton = styled.button`
  grid-column: 2;
  justify-self: start;
  width: 77px;
  height: 20px;
  margin: 19px 0 0 3px;
  padding: 3px 0 0;
  border: 1px solid #7a7a7a;
  color: #333;
  font-size: 11px;
  background: linear-gradient(#f3f3f3 1px, #b5b5b5 1px, #bbb 4px, #cdd1d5 4px, #c9cfd4 10px, #e4e6ea 14px);
`;

const NodeLink = styled.a`
  display: flex;
  align-items: center;
  gap: 2px;
  margin-top: 19px;
  height: 15px;
  color: ${blue};
  font-size: 13px;
`;

const Legend = styled.section`
  margin-top: 34px;
  h4 {
    font-size: 11px;
  }
  li {
    display: flex;
    align-items: center;
    gap: 2px;
  }
`;

const Tools = styled.aside`
  padding: 20px 0 0 10px;
  border-left: 1px dotted #ddd;
`;

const Box = styled.section`
  margin: 0 6px 20px 0;
`;

const BoxTitle = styled.h3`
  padding: 0 4px 0 19px;
  border-radius: 4px 4px 0 0;
  background: #9da3b6;
  color: #fff;
  font-size: 11px;
  line-height: 14px;
`;

const BoxList = styled.ul`
  border: 1px dotted #bbb;
  border-width: 0 1px;
  border-bottom: 1px solid #bbb;
  background: linear-gradient(to top, #e8e9ed 8px, #f3f4f4 8px, #f3f4f4 38px, #fefefe 38px);
`;

const BoxLink = styled.a`
  display: flex;
  align-items: center;
  gap: 2px;
  height: ${(p) => (p.$tall ? 18 : 17)}px;
  color: #666;
`;

const TopLink = styled.a`
  display: flex;
  align-items: center;
  justify-content: flex-end;
  gap: 1px;
  margin-top: -11px;
  padding-right: 1px;
  color: #666;
`;
